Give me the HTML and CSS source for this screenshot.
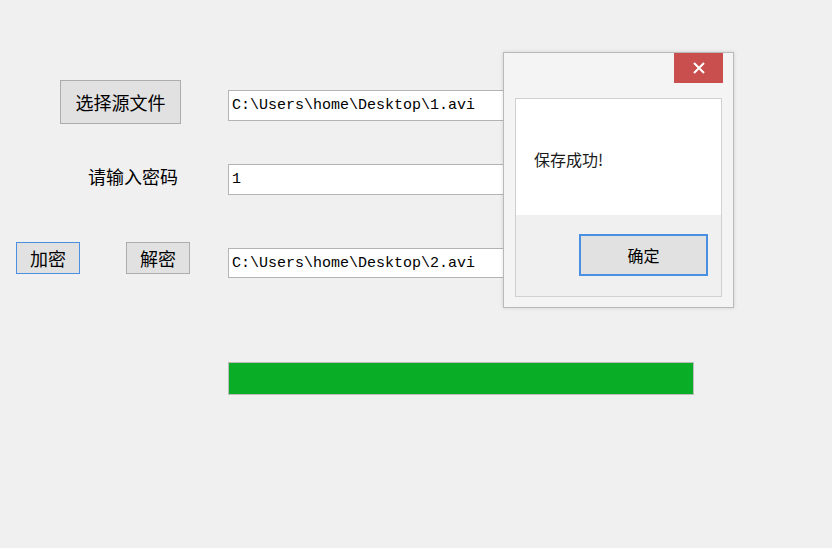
FILE: index.html
```html
<!DOCTYPE html>
<html lang="zh-CN">
<head>
    <meta charset="UTF-8">
    <title>文件加密</title>
    <link rel="stylesheet" href="styles.css">
</head>
<body>
    <div class="form">
        <!-- Quelldatei -->
        <div class="row row-source">
            <div class="left">
                <button class="btn btn-source">选择源文件</button>
            </div>
            <input class="field field-source" type="text" value="C:\Users\home\Desktop\1.avi">
        </div>

        <!-- Passwort -->
        <div class="row row-pass">
            <div class="left">
                <span class="label">请输入密码</span>
            </div>
            <input class="field" type="text" value="1">
        </div>

        <!-- Aktionen -->
        <div class="row row-actions">
            <div class="left actions">
                <button class="btn btn-small focused">加密</button>
                <button class="btn btn-small">解密</button>
            </div>
            <input class="field field-target" type="text" value="C:\Users\home\Desktop\2.avi">
        </div>

        <div class="progress">
            <div class="progress-fill"></div>
        </div>
    </div>

    <!-- Meldung -->
    <div class="dialog">
        <div class="dialog-title">
            <span class="close-btn">
                <svg width="14" height="14" viewBox="0 0 14 14">
                    <path d="M2 2 L12 12 M12 2 L2 12" stroke="#fff" stroke-width="2" fill="none"/>
                </svg>
            </span>
        </div>
        <div class="dialog-body">
            <div class="dialog-msg">保存成功!</div>
            <div class="dialog-foot">
                <button class="btn btn-ok">确定</button>
            </div>
        </div>
    </div>
</body>
</html>
```

FILE: styles.css
```css
:root {
    --bg: #f0f0f0;
    --btn: #e1e1e1;
    --btn-border: #adadad;
    --focus: #4a90e2;
    --field-border: #b4b4b4;
    --green: #0aad26;
}

body {
    margin: 0;
    width: 832px;
    height: 548px;
    background: var(--bg);
    font-family: "Noto Sans CJK SC", "Noto Sans", sans-serif;
    color: #000;
    position: relative;
    overflow: hidden;
}

.form {
    padding-top: 80px;
}

.row {
    display: flex;
    align-items: flex-start;
}

.left {
    width: 228px;
    flex-shrink: 0;
}

.btn {
    font-family: "Noto Sans CJK SC", sans-serif;
    font-size: 18px;
    background: var(--btn);
    border: 1px solid var(--btn-border);
    color: #000;
    padding: 0;
    margin: 0;
}

.btn-source {
    margin-left: 60px;
    width: 121px;
    height: 44px;
}

.field {
    width: 466px;
    height: 31px;
    box-sizing: border-box;
    border: 1px solid var(--field-border);
    background: #fff;
    font-family: "Liberation Mono", monospace;
    font-size: 15px;
    padding: 0 3px;
    margin: 0;
    color: #000;
}

.field-source {
    margin-top: 10px;
}

.row-pass {
    margin-top: 40px;
    align-items: center;
}

.label {
    display: block;
    margin-left: 88px;
    font-size: 18px;
    line-height: 31px;
    position: relative;
    top: -3px;
}

.row-actions {
    margin-top: 47px;
}

.actions {
    display: flex;
    gap: 46px;
    padding-left: 16px;
    box-sizing: border-box;
}

.btn-small {
    width: 64px;
    height: 32px;
}

.btn-small.focused {
    border-color: var(--focus);
}

.field-target {
    margin-top: 6px;
    height: 30px;
}

.progress {
    margin: 84px 0 0 228px;
    width: 466px;
    height: 33px;
    box-sizing: border-box;
    border: 1px solid #bcbcbc;
    background: #e6e6e6;
}

.progress-fill {
    height: 100%;
    width: 100%;
    background: var(--green);
}

/* Meldungsfenster */
.dialog {
    position: absolute;
    left: 503px;
    top: 52px;
    width: 231px;
    height: 256px;
    box-sizing: border-box;
    background: #f4f4f4;
    border: 1px solid #b9b9b9;
    padding: 0 11px 10px 11px;
    display: flex;
    flex-direction: column;
    box-shadow: 0 0 4px rgba(0, 0, 0, 0.12);
}

.dialog-title {
    height: 45px;
    display: flex;
    justify-content: flex-end;
}

.close-btn {
    width: 49px;
    height: 30px;
    background: #c94f4f;
    display: flex;
    align-items: center;
    justify-content: center;
    margin-right: -1px;
}

.dialog-body {
    flex: 1;
    border: 1px solid #d0d0d0;
    display: flex;
    flex-direction: column;
}

.dialog-msg {
    background: #fff;
    height: 116px;
    box-sizing: border-box;
    padding: 48px 0 0 18px;
    font-size: 16px;
    color: #1a1a1a;
}

.dialog-foot {
    flex: 1;
    background: var(--bg);
    display: flex;
    justify-content: flex-end;
    align-items: flex-start;
    padding: 19px 13px 0 0;
}

.btn-ok {
    width: 129px;
    height: 42px;
    border: 2px solid var(--focus);
    font-size: 16px;
}
```
